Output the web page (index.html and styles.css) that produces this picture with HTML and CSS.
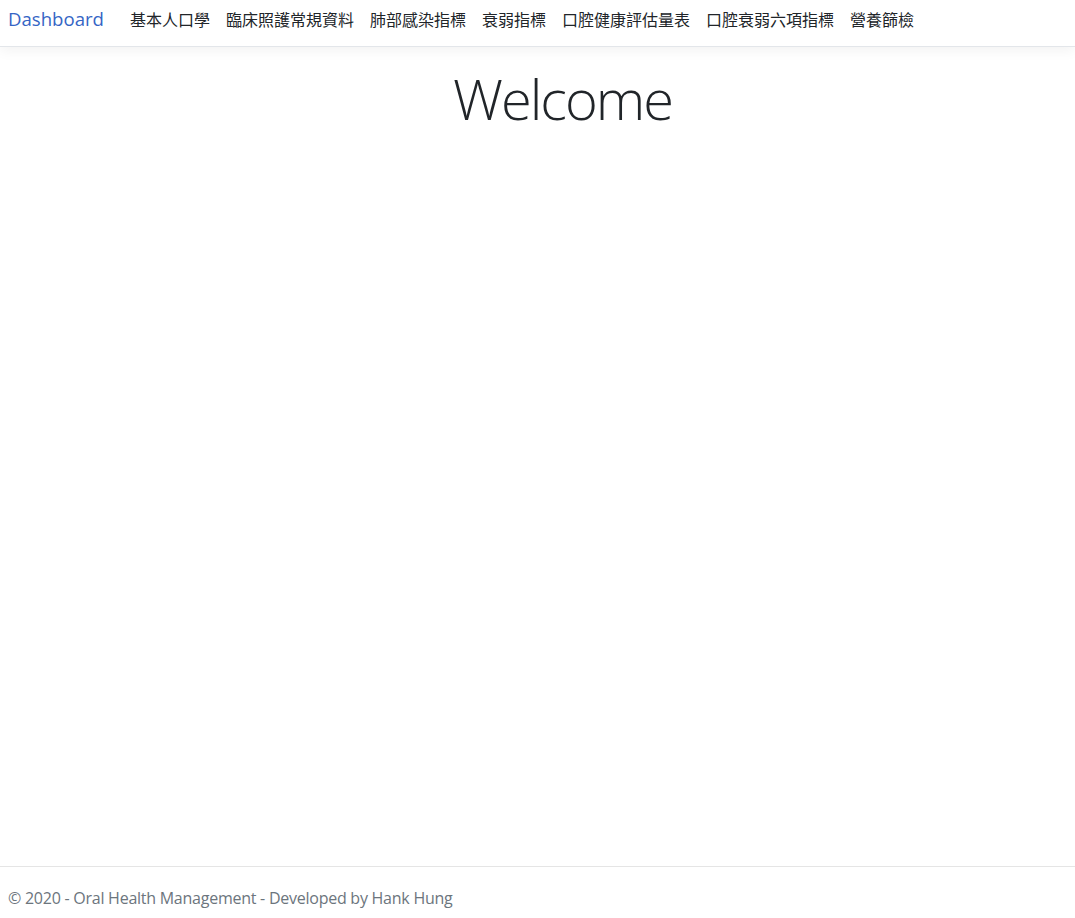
FILE: index.html
```html
<!DOCTYPE html>
<html lang="zh-Hant">
<head>
<meta charset="utf-8">
<title>Dashboard</title>
<link rel="stylesheet" href="styles.css">
</head>
<body>
<header class="navbar">
  <a class="brand" href="#">Dashboard</a>
  <ul class="nav">
    <li><a class="nav-link" href="#">基本人口學</a></li>
    <li><a class="nav-link" href="#">臨床照護常規資料</a></li>
    <li><a class="nav-link" href="#">肺部感染指標</a></li>
    <li><a class="nav-link" href="#">衰弱指標</a></li>
    <li><a class="nav-link" href="#">口腔健康評估量表</a></li>
    <li><a class="nav-link" href="#">口腔衰弱六項指標</a></li>
    <li><a class="nav-link" href="#">營養篩檢</a></li>
  </ul>
</header>
<main class="main">
  <h1 class="display">Welcome</h1>
</main>
<footer class="footer">© 2020 - Oral Health Management - Developed by Hank Hung</footer>
</body>
</html>
```
FILE: styles.css
```css
html, body {
  margin: 0;
  padding: 0;
}
body {
  font-family: "Open Sans", "Noto Sans CJK TC", sans-serif;
  font-size: 16px;
  color: #212529;
  background: #fff;
  display: flex;
  flex-direction: column;
  min-height: 100vh;
}
.navbar {
  display: flex;
  align-items: center;
  height: 47px;
  padding: 0 8px 8px;
  border-bottom: 1px solid #e3e6ea;
  box-shadow: 0 4px 12px rgba(0,0,0,0.05);
  box-sizing: border-box;
}
.brand {
  font-size: 18.6px;
  color: #3565c5;
  text-decoration: none;
  margin-right: 18px;
  line-height: 1;
}
.nav {
  list-style: none;
  margin: 0;
  padding: 0;
  display: flex;
}
.nav-link {
  display: block;
  padding: 0 8px;
  color: #212529;
  text-decoration: none;
  font-family: "Noto Sans CJK TC", sans-serif;
  font-size: 16px;
  line-height: 1;
}
.main {
  flex: 1;
  display: flex;
  justify-content: center;
  padding-left: 50px;
}
.display {
  margin: 18px 0 0;
  font-size: 56px;
  font-weight: 300;
  letter-spacing: -2px;
  line-height: 1.2;
  color: #212529;
}
.footer {
  border-top: 1px solid #e5e5e5;
  height: 52px;
  box-sizing: border-box;
  padding: 20px 8px 0;
  color: #6c757d;
  font-size: 16px;
  letter-spacing: -0.25px;
  line-height: 22px;
  white-space: nowrap;
}
```
